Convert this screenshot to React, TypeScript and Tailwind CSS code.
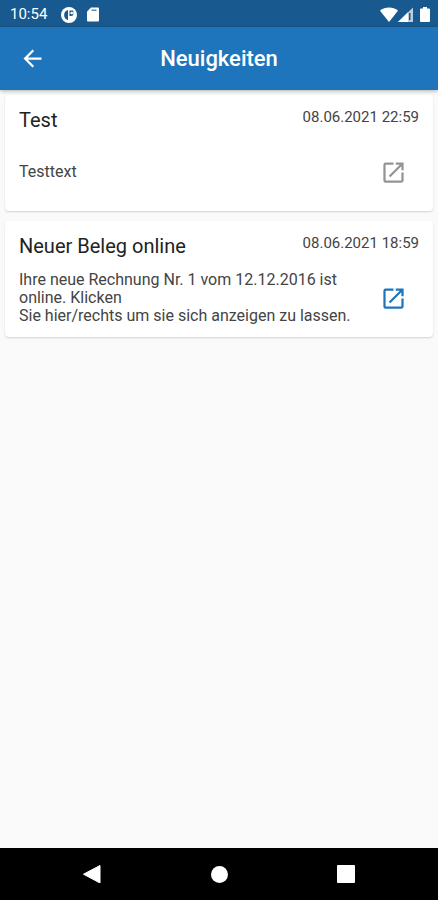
import { MdArrowBack, MdOpenInNew } from "react-icons/md"

const news = [
    {
        title: "Test",
        date: "08.06.2021 22:59",
        text: "Testtext",
        iconClass: "text-[#949494]",
    },
    {
        title: "Neuer Beleg online",
        date: "08.06.2021 18:59",
        text: "Ihre neue Rechnung Nr. 1 vom 12.12.2016 ist online. Klicken\nSie hier/rechts um sie sich anzeigen zu lassen.",
        iconClass: "text-[#1e75bb]",
    },
]

function StatusBar() {
    return (<div className="flex h-[27px] items-center justify-between bg-[#185a8f] pt-0.5 pr-2 pl-2.5 text-white">
        <div className="flex items-center">
            <span className="text-[15px] leading-none">10:54</span>
            <svg viewBox="0 0 16 16" className="ml-3.5 size-4">
                <circle cx="8" cy="8" r="8" fill="currentColor" />
                <path d="M7 3v10.200A5.300 5.300 0 0 1 7 3z" fill="#185a8f" />
                <path d="M8.500 3.500h3.800v3.500a2 2 0 0 1-2 2H8.500z" fill="#185a8f" />
                <circle cx="10.700" cy="6" r="1.300" fill="currentColor" />
            </svg>
            <svg viewBox="0 0 12 15" className="ml-2.5 h-[15px] w-3">
                <path d="M4 .5h7a1 1 0 0 1 1 1v12a1 1 0 0 1-1 1H1a1 1 0 0 1-1-1v-9z" fill="currentColor" />
                <path d="M4.500 2.500h5v1.500h-5z" fill="#185a8f" fillOpacity=".7" />
            </svg>
        </div>
        <div className="flex items-center">
            <svg viewBox="0 0 18 15" className="h-[15px] w-[18px]" fill="currentColor">
                <path d="M9 15 0 3.800C2.500 1.600 5.600.5 9 .5s6.500 1.100 9 3.300z" />
            </svg>
            <svg viewBox="0 0 15 15" className="h-[15px] w-[15px]" fill="currentColor">
                <path d="M15 .5V15H0z" fillOpacity=".7" />
                <path d="M10 5.300V15H0z" />
                <path d="M11 6h1.500v7H11z" fill="#185a8f" />
            </svg>
            <svg viewBox="0 0 10 15" className="ml-[7px] h-[15px] w-2.5" fill="currentColor">
                <path d="M3 0h4v1.500h2a1 1 0 0 1 1 1V14a1 1 0 0 1-1 1H1a1 1 0 0 1-1-1V2.500a1 1 0 0 1 1-1h2z" />
            </svg>
        </div>
    </div>)
}

function NewsCard({ title, date, text, iconClass }: (typeof news)[number]) {
    return (<article className="flex flex-col rounded-sm bg-white px-3.5 py-3 shadow-[0_1px_2px_rgba(0,0,0,0.16)]">
        <div className="flex items-start justify-between">
            <h2 className="text-xl leading-[26px] text-[#222]">{title}</h2>
            <time className="text-[15px] leading-5 text-[#444]">{date}</time>
        </div>
        <div className="mt-3 flex min-h-[54px] items-center justify-between">
            <p className="w-[340px] text-base leading-[18px] whitespace-pre-line text-[#444]">{text}</p>
            <button type="button" aria-label={`${title} öffnen`} className={`mr-3 ${iconClass}`}>
                <MdOpenInNew className="size-[27px]" />
            </button>
        </div>
    </article>)
}

export default function App() {
    return (<div className="flex min-h-screen flex-col bg-[#fafafa] font-[Roboto,sans-serif]">
        <StatusBar />
        <header className="grid h-[63px] grid-cols-[64px_1fr_64px] items-center bg-[#1e75bb] text-white shadow-[0_1px_4px_rgba(0,0,0,0.3)]">
            <button type="button" aria-label="Zurück" className="flex justify-center">
                <MdArrowBack className="size-[27px]" />
            </button>
            <h1 className="text-center text-[22px] leading-7 font-medium">Neuigkeiten</h1>
        </header>

        <main className="flex flex-1 flex-col gap-2.5 px-[5px] pt-[5px]">
            {news.map((item) => <NewsCard key={item.title} {...item} />)}
        </main>

        <nav className="flex h-[52px] items-center justify-between bg-black px-[83px] text-white">
            <button type="button" aria-label="Zurück">
                <svg viewBox="0 0 18 18" className="size-[18px]" fill="currentColor">
                    <path d="M17 0.500v17.500L.5 9.200z" stroke="currentColor" strokeLinejoin="round" />
                </svg>
            </button>
            <button type="button" aria-label="Startseite" className="size-[17px] rounded-full bg-white" />
            <button type="button" aria-label="Übersicht" className="size-[18px] rounded-[1px] bg-white" />
        </nav>
    </div>)
}
